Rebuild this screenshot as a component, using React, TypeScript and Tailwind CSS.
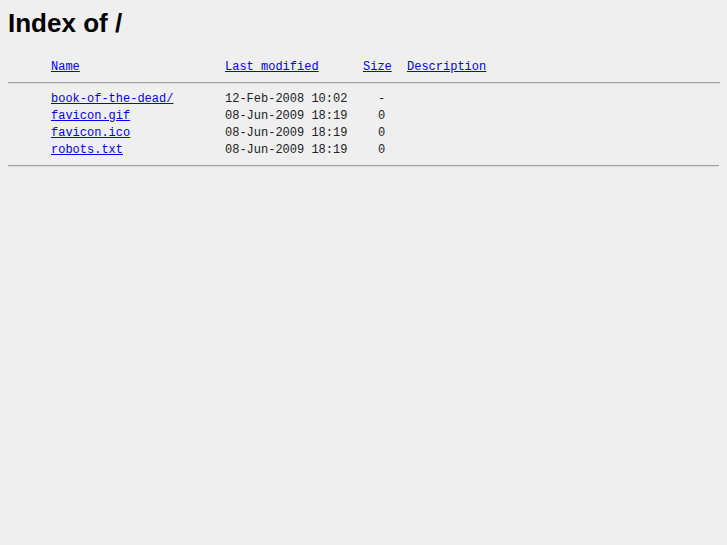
const rows = [
  { name: "book-of-the-dead/", date: "12-Feb-2008 10:02", size: "-" },
  { name: "favicon.gif", date: "08-Jun-2009 18:19", size: "0" },
  { name: "favicon.ico", date: "08-Jun-2009 18:19", size: "0" },
  { name: "robots.txt", date: "08-Jun-2009 18:19", size: "0" },
];

const mono = "font-['Liberation_Mono','DejaVu_Sans_Mono',monospace] text-[12px] leading-[17px]";
const link = "text-[#0000ee] underline";

export default function App() {
  return (
    <div className="min-h-screen bg-[#efefef] p-2 text-[#222]">
      <h1 className="font-['Liberation_Sans',Arial,sans-serif] text-[26px] font-bold leading-[31px] text-black">
        Index of /
      </h1>

      <div className={`mt-[20px] ${mono}`}>
        <div className="flex h-[17px] pl-[43px]">
          <a className={`${link} w-[174px]`}>Name</a>
          <a className={`${link} w-[138px]`}>Last modified</a>
          <a className={`${link} w-[44px]`}>Size</a>
          <a className={link}>Description</a>
        </div>

        <hr className="mt-[6px] mb-[7px] mr-[-1px] h-0 border-0 border-t border-b border-t-[#a3a3a3] border-b-[#dadada]" />

        {rows.map((r) => (
          <div key={r.name} className="flex h-[17px] pl-[43px]">
            <a className={`${link} w-[174px]`}>{r.name}</a>
            <span className="w-[138px]">{r.date}</span>
            <span className="w-[44px] pl-[15px]">{r.size}</span>
          </div>
        ))}

        <hr className="my-[6px] h-0 border-0 border-t border-b border-t-[#a3a3a3] border-b-[#dadada]" />
      </div>
    </div>
  );
}
